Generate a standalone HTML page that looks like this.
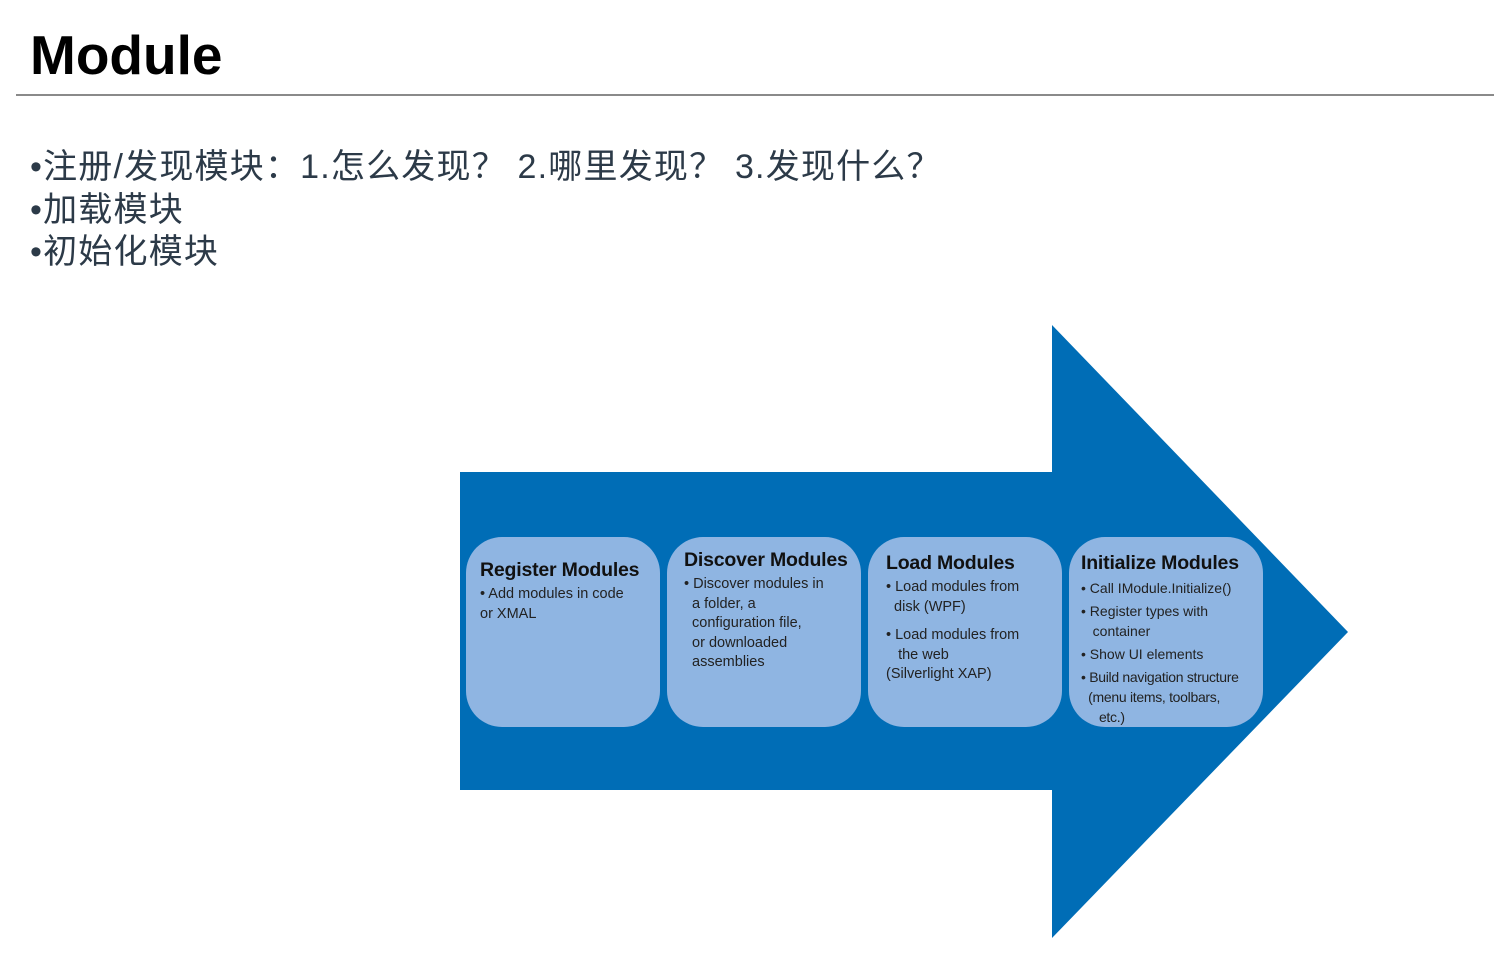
<!DOCTYPE html>
<html><head><meta charset="utf-8"><style>
body{margin:0;width:1494px;height:960px;background:#fff;position:relative;overflow:hidden;font-family:"Liberation Sans","Noto Sans CJK SC",sans-serif}
h1{position:absolute;left:30px;top:22px;margin:0;font-size:55px;font-weight:bold;color:#000;line-height:66px}
.hr{position:absolute;left:16px;top:94px;width:1478px;height:2px;background:#8a8a8a}
.b{position:absolute;left:30px;font-size:34px;color:#2c3a48;line-height:42px;white-space:pre;letter-spacing:1.2px}
.box{position:absolute;top:537px;width:194px;height:190px;background:#8fb5e2;border-radius:36px;box-sizing:border-box;padding:18px 4px 0 14px;color:#222;font-size:14.5px;line-height:19.5px;font-family:"Liberation Sans",sans-serif;white-space:nowrap}
.box b{display:block;font-size:19.5px;line-height:26px;color:#111;margin-bottom:2px;letter-spacing:-0.2px}
.box p{margin:0}
</style></head><body>
<h1>Module</h1>
<div class="hr"></div>
<div class="b" style="top:146px">•注册/发现模块：1.怎么发现？ 2.哪里发现？ 3.发现什么？</div>
<div class="b" style="top:189px">•加载模块</div>
<div class="b" style="top:231px">•初始化模块</div>
<svg style="position:absolute;left:0;top:0" width="1494" height="960"><polygon points="460,472 1052,472 1052,325 1348,632 1052,938 1052,790 460,790" fill="#006db6"/></svg>
<div class="box" style="left:466px;padding-top:20px"><b>Register Modules</b><p>• Add modules in code<br>or XMAL</p></div>
<div class="box" style="left:667px;padding-top:10px;padding-left:17px"><b>Discover Modules</b><p>• Discover modules in<br>&nbsp; a folder, a<br>&nbsp; configuration file,<br>&nbsp; or downloaded<br>&nbsp; assemblies</p></div>
<div class="box" style="left:868px;padding-top:13px;padding-left:18px"><b>Load Modules</b><p>• Load modules from<br>&nbsp; disk (WPF)</p><p style="margin-top:9px">• Load modules from<br>&nbsp;&nbsp; the web<br>(Silverlight XAP)</p></div>
<div class="box" style="left:1069px;padding-top:13px;padding-left:12px;font-size:14px;line-height:20px;overflow:visible"><b>Initialize Modules</b><p>• Call IModule.Initialize()</p><p style="margin-top:3px">• Register types with<br>&nbsp;&nbsp; container</p><p style="margin-top:3px">• Show UI elements</p><p style="margin-top:3px;letter-spacing:-0.3px">• Build navigation structure<br>&nbsp;&nbsp;(menu items, toolbars,<br>&nbsp;&nbsp;&nbsp;&nbsp; etc.)</p></div>
</body></html>
